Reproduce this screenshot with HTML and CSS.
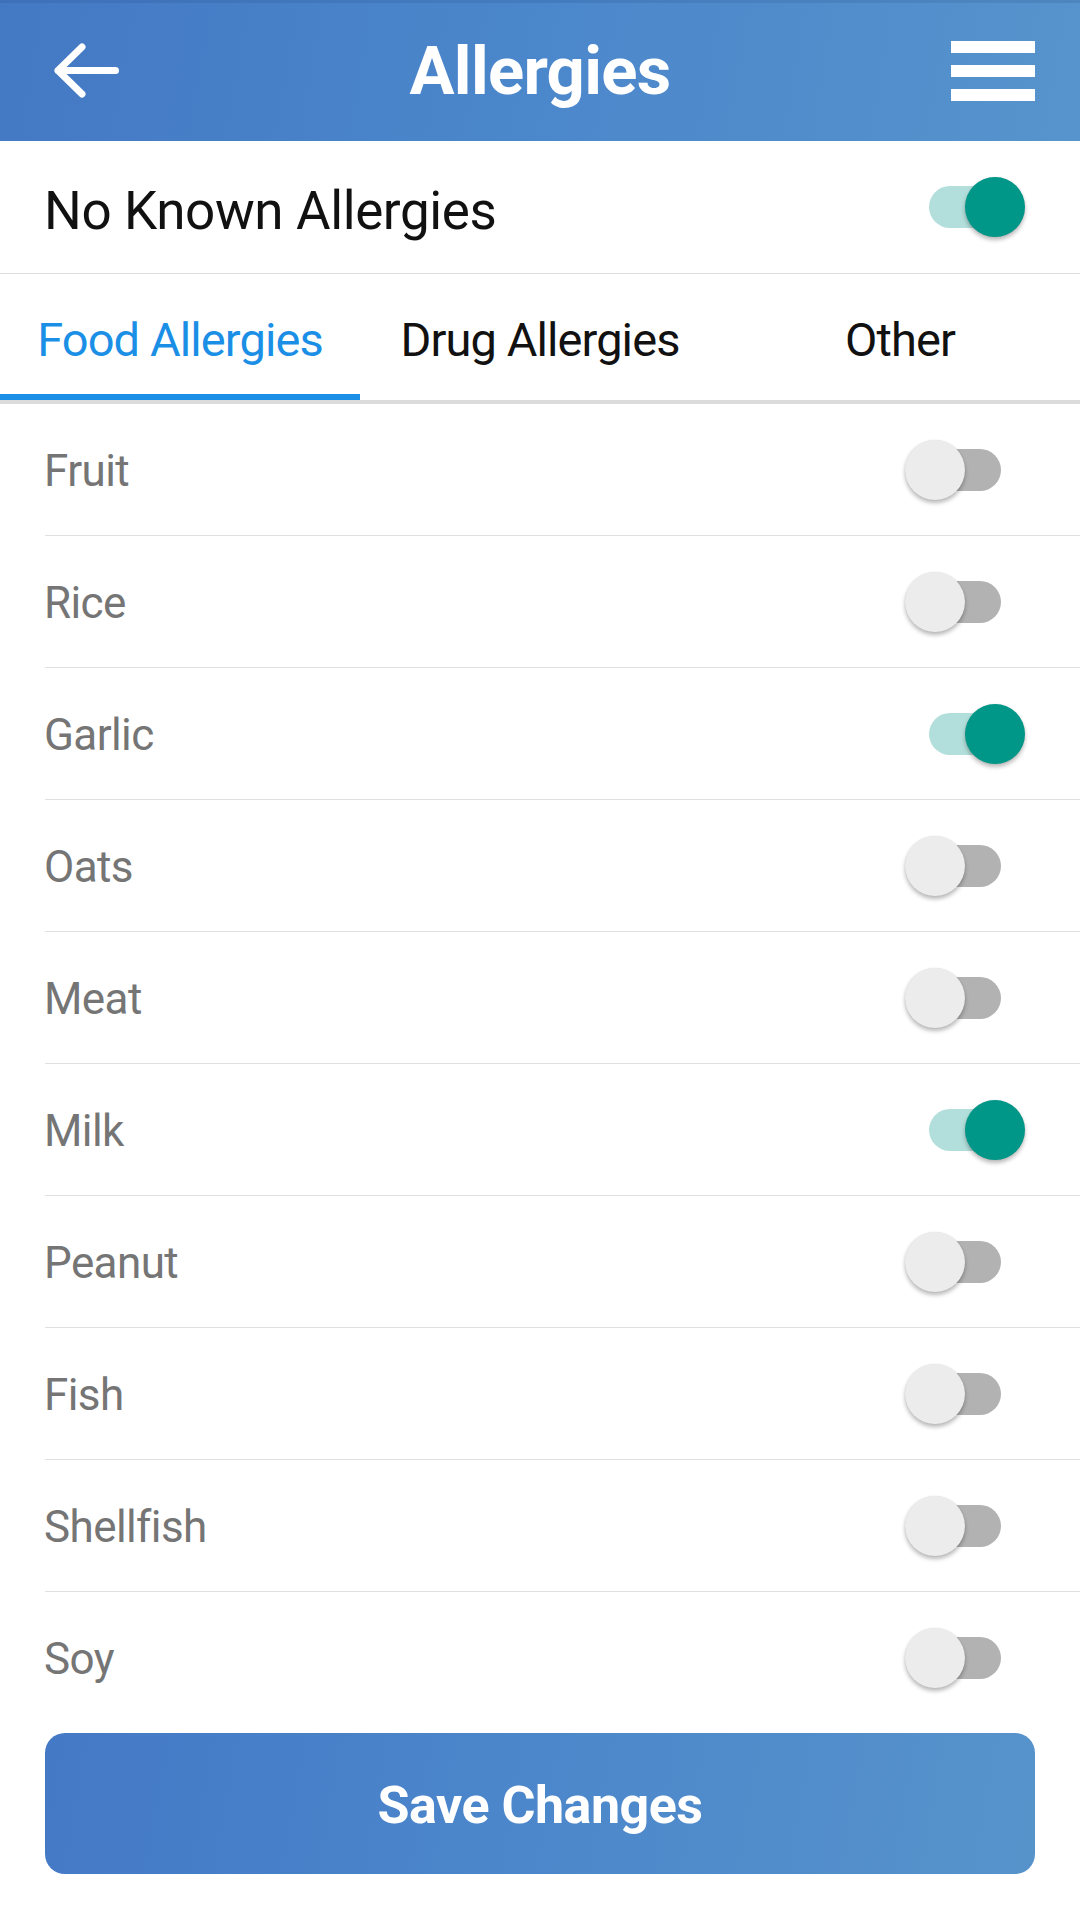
FILE: index.html
```html
<!DOCTYPE html>
<html lang="en">
<head>
<meta charset="utf-8">
<title>Allergies</title>
<link rel="stylesheet" href="styles.css">
</head>
<body>
<div class="screen">
  <header class="appbar">
    <div class="back">
      <svg width="70" height="60" viewBox="0 0 70 60" aria-hidden="true">
        <path d="M6 29.5 H63.5 M30 6 L6 29.5 L30 53" fill="none" stroke="#fff" stroke-width="7" stroke-linecap="round" stroke-linejoin="round"/>
      </svg>
    </div>
    <h1 class="title">Allergies</h1>
    <div class="menu" aria-hidden="true">
      <span class="bar"></span><span class="bar"></span><span class="bar"></span>
    </div>
  </header>

  <div class="nka">
    <span class="nka-label">No Known Allergies</span>
    <span class="switch on"></span>
  </div>

  <nav class="tabs">
    <div class="tab active">Food Allergies</div>
    <div class="tab">Drug Allergies</div>
    <div class="tab">Other</div>
  </nav>

  <ul class="list">
    <li class="item"><span class="label">Fruit</span><span class="switch"></span></li>
    <li class="item"><span class="label">Rice</span><span class="switch"></span></li>
    <li class="item"><span class="label">Garlic</span><span class="switch on"></span></li>
    <li class="item"><span class="label">Oats</span><span class="switch"></span></li>
    <li class="item"><span class="label">Meat</span><span class="switch"></span></li>
    <li class="item"><span class="label">Milk</span><span class="switch on"></span></li>
    <li class="item"><span class="label">Peanut</span><span class="switch"></span></li>
    <li class="item"><span class="label">Fish</span><span class="switch"></span></li>
    <li class="item"><span class="label">Shellfish</span><span class="switch"></span></li>
    <li class="item"><span class="label">Soy</span><span class="switch"></span></li>
  </ul>

  <div class="actions">
    <button class="save">Save Changes</button>
  </div>
</div>
</body>
</html>
```

FILE: styles.css
```css
* { box-sizing: border-box; }

html, body {
  margin: 0;
  padding: 0;
  background: #ffffff;
}

body {
  font-family: Roboto, "Noto Sans", "Liberation Sans", sans-serif;
  width: 1080px;
  height: 1920px;
  overflow: hidden;
}

.screen {
  display: flex;
  flex-direction: column;
}

/* App bar */
.appbar {
  height: 141px;
  display: grid;
  grid-template-columns: 1fr auto 1fr;
  align-items: center;
  background: linear-gradient(100deg, #4479c4 0%, #4b87cb 50%, #5793cc 100%);
  box-shadow: inset 0 3px 0 rgba(20, 50, 100, 0.12);
}

.back {
  padding-left: 52px;
  display: flex;
  align-items: center;
  padding-top: 1px;
}

.back svg { display: block; }

.title {
  margin: 0;
  color: #ffffff;
  font-weight: 700;
  font-size: 67px;
  letter-spacing: -0.7px;
  line-height: 1;
  padding-top: 2px;
}

.menu {
  justify-self: end;
  margin-right: 45px;
  display: flex;
  flex-direction: column;
  gap: 12px;
  padding-top: 1px;
}

.bar {
  display: block;
  width: 84px;
  height: 12px;
  background: #ffffff;
}

/* No known allergies */
.nka {
  height: 133px;
  border-bottom: 1px solid #dedede;
  display: flex;
  align-items: center;
  justify-content: space-between;
  padding-left: 44px;
  padding-right: 79px;
}

.nka-label {
  font-size: 53px;
  letter-spacing: -0.4px;
  color: #111111;
  padding-top: 8px;
}

/* Tabs */
.tabs {
  display: grid;
  grid-template-columns: repeat(3, 360px);
  border-bottom: 4px solid #dcdcdc;
  height: 130px;
}

.tab {
  display: flex;
  align-items: center;
  justify-content: center;
  font-size: 47px;
  letter-spacing: -0.9px;
  color: #111111;
  padding-top: 11px;
  border-bottom: 6px solid transparent;
}

.tab.active {
  color: #1b8fe6;
  border-bottom-color: #1b8fe6;
}

/* List */
.list {
  list-style: none;
  margin: 0;
  padding: 0;
}

.item {
  margin-left: 45px;
  height: 132px;
  border-bottom: 1px solid #e0e0e0;
  display: flex;
  align-items: center;
  justify-content: space-between;
  padding-right: 79px;
}

.item:last-child {
  border-bottom: none;
  height: 131px;
}

.label {
  font-size: 44px;
  letter-spacing: -0.6px;
  color: #757575;
  margin-left: -1px;
  padding-top: 3px;
}

/* Switch */
.switch {
  position: relative;
  display: block;
  width: 72px;
  height: 42px;
  border-radius: 21px;
  background: #b2b2b2;
  flex: none;
}

.switch::after {
  content: "";
  position: absolute;
  top: -9px;
  left: -24px;
  width: 60px;
  height: 60px;
  border-radius: 50%;
  background: #ececec;
  box-shadow: 0 3px 4px rgba(0, 0, 0, 0.28), 0 0 1px rgba(0, 0, 0, 0.12);
}

.switch.on {
  background: #b2dfdb;
}

.switch.on::after {
  left: 36px;
  background: #009688;
}

/* Save button */
.actions {
  padding: 10px 45px 0 45px;
}

.save {
  display: block;
  width: 990px;
  height: 141px;
  border: none;
  border-radius: 20px;
  background: linear-gradient(100deg, #4479c6 0%, #4c87cb 50%, #5793cb 100%);
  color: #ffffff;
  font-family: Roboto, "Noto Sans", "Liberation Sans", sans-serif;
  font-weight: 700;
  font-size: 52px;
  letter-spacing: -0.5px;
  padding: 4px 0 0 0;
}
```
